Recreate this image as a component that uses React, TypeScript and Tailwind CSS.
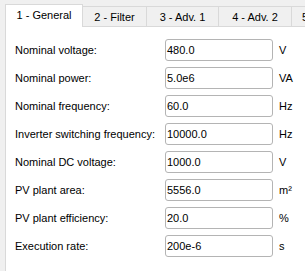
import React from "react";

const rows: [string, string, string][] = [
  ["Nominal voltage:", "480.0", "V"],
  ["Nominal power:", "5.0e6", "VA"],
  ["Nominal frequency:", "60.0", "Hz"],
  ["Inverter switching frequency:", "10000.0", "Hz"],
  ["Nominal DC voltage:", "1000.0", "V"],
  ["PV plant area:", "5556.0", "m²"],
  ["PV plant efficiency:", "20.0", "%"],
  ["Execution rate:", "200e-6", "s"],
];

export default function App() {
  return (
    <div
      className="w-[305px] h-[271px] overflow-hidden bg-[#f0f0f0] pl-[5px] pt-[4px] text-[11px] text-black"
      style={{ fontFamily: '"Liberation Sans", Arial, sans-serif' }}
    >
      <div className="flex items-end h-[22px] w-[400px]">
        <div className="relative z-10 -mb-px h-[23px] w-[78px] shrink-0 bg-white border border-b-0 border-[#d9d9d9] flex items-center justify-center pb-[2px]">
          1 - General
        </div>
        <div className="h-[20px] w-[64px] shrink-0 bg-[#f0f0f0] border-t border-r border-[#d9d9d9] flex items-center justify-center pt-[1px]">
          2 - Filter
        </div>
        <div className="h-[20px] w-[72px] shrink-0 bg-[#f0f0f0] border-t border-r border-[#d9d9d9] flex items-center justify-center pt-[1px]">
          3 - Adv. 1
        </div>
        <div className="h-[20px] w-[73px] shrink-0 bg-[#f0f0f0] border-t border-r border-[#d9d9d9] flex items-center justify-center pt-[1px]">
          4 - Adv. 2
        </div>
        <div className="h-[20px] w-[73px] shrink-0 bg-[#f0f0f0] border-t border-r border-[#d9d9d9] flex items-center pl-[10px] pt-[1px]">
          5 - Adv. 3
        </div>
      </div>
      <div className="w-[400px] h-[300px] bg-white border-t border-l border-[#d9d9d9] pl-[9px] pt-[12px]">
        <div className="flex flex-col gap-[6px]">
          {rows.map(([label, value, unit]) => (
            <div key={label} className="flex items-center h-[22px]">
              <div className="w-[150px] shrink-0 whitespace-nowrap">{label}</div>
              <div className="w-[108px] h-[22px] shrink-0 border border-[#b4b4b4] rounded-[3px] bg-white flex items-center pl-[1px]">
                {value}
              </div>
              <div className="pl-[6px]">{unit}</div>
            </div>
          ))}
        </div>
      </div>
    </div>
  );
}
